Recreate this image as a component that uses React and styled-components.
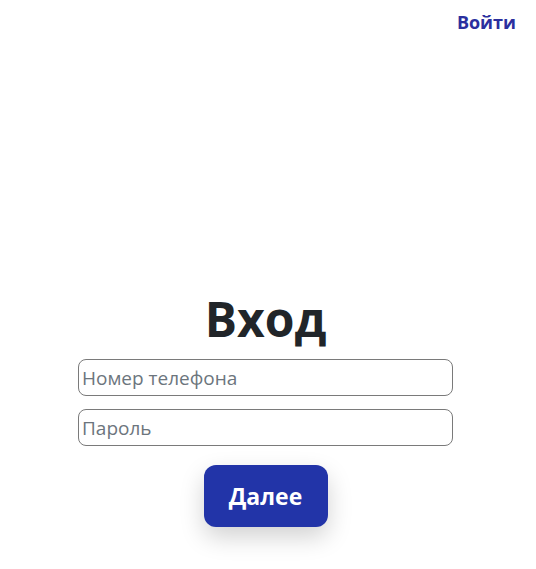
import React, { useState } from 'react';
import styled, { createGlobalStyle } from 'styled-components';

const GlobalStyle = createGlobalStyle`
  body {
    margin: 0;
    background: #ffffff;
    font-family: 'Open Sans', 'Noto Sans', sans-serif;
  }
`;

const Page = styled.div`
  min-height: 569px;
  display: flex;
  flex-direction: column;
`;

const Header = styled.header`
  display: flex;
  justify-content: flex-end;
  padding: 10px 20px 0 0;
`;

const LoginLink = styled.a`
  color: #2b2f9e;
  font-weight: 700;
  font-size: 18px;
  text-decoration: none;
  cursor: pointer;
`;

const Main = styled.main`
  display: flex;
  flex-direction: column;
  align-items: center;
  padding: 257px 5px 0 0;
`;

const Title = styled.h1`
  margin: 0 0 12px;
  font-size: 48px;
  line-height: 56px;
  font-weight: 700;
  color: #212529;
`;

const Form = styled.form`
  display: flex;
  flex-direction: column;
  align-items: center;
  gap: 13px;
`;

const Field = styled.input`
  box-sizing: border-box;
  width: 375px;
  height: 37px;
  padding: 0 3px;
  border: 1px solid #7a7a7a;
  border-radius: 8px;
  font-family: inherit;
  font-size: 19px;
  color: #212529;
  outline: none;

  &::placeholder {
    color: #6c757d;
  }
`;

const SubmitButton = styled.button`
  margin-top: 6px;
  width: 124px;
  height: 62px;
  border: none;
  border-radius: 12px;
  background: #2234a8;
  color: #ffffff;
  font-family: inherit;
  font-weight: 700;
  font-size: 23px;
  box-shadow: 0 10px 24px rgba(0, 0, 0, 0.18);
  cursor: pointer;
`;

export default function App() {
  const [phone, setPhone] = useState('');
  const [password, setPassword] = useState('');

  return (
    <Page>
      <GlobalStyle />
      <Header>
        <LoginLink>Войти</LoginLink>
      </Header>
      <Main>
        <Title>Вход</Title>
        <Form onSubmit={(e) => e.preventDefault()}>
          <Field
            type="tel"
            placeholder="Номер телефона"
            value={phone}
            onChange={(e) => setPhone(e.target.value)}
          />
          <Field
            type="password"
            placeholder="Пароль"
            value={password}
            onChange={(e) => setPassword(e.target.value)}
          />
          <SubmitButton type="submit">Далее</SubmitButton>
        </Form>
      </Main>
    </Page>
  );
}
